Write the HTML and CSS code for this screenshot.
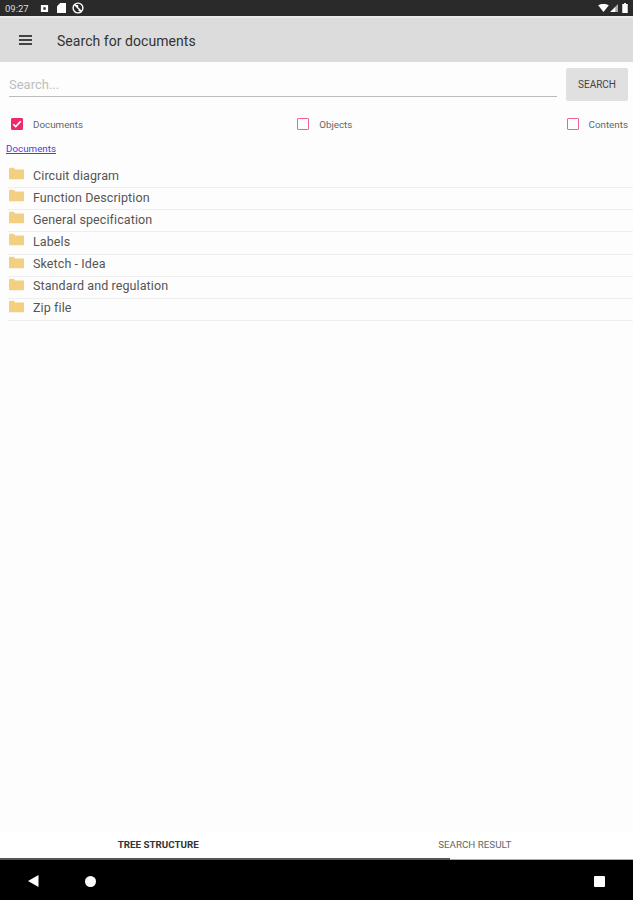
FILE: index.html
```html
<!DOCTYPE html>
<html>
<head>
<meta charset="UTF-8">
<title>Search for documents</title>
<link rel="stylesheet" href="styles.css">
</head>
<body>
<div class="status">
  <span class="time">09:27</span>
  <svg class="st-icon" viewBox="0 0 10 10"><path fill="#fff" fill-rule="evenodd" d="M1 1h8v8H1zM3.700 3.700v2.600h2.600V3.700z"/></svg>
  <svg class="st-icon st-file" viewBox="0 0 10 11"><path fill="#fff" d="M3.500 0H10v11H0V3.500z"/></svg>
  <svg class="st-icon st-wide" viewBox="0 0 12 12"><circle cx="6" cy="6" r="4.900" fill="none" stroke="#fff" stroke-width="1.400"/><path stroke="#fff" stroke-width="1.400" d="M2.600 2.600l6.800 6.800"/><circle cx="5" cy="4" r="1.300" fill="#fff"/><circle cx="7.500" cy="8.500" r="1" fill="#fff"/></svg>
  <span class="st-space"></span>
  <svg class="st-wifi" viewBox="0 0 12 9"><path fill="#fff" d="M0 1.500C3.500-.5 8.500-.5 12 1.500L6 9z"/></svg>
  <svg class="st-signal" viewBox="0 0 9 9"><path fill="#aaa" d="M9 0v9H0z"/><path fill="#fff" d="M6 3.500V9H.5z"/></svg>
  <svg class="st-batt" viewBox="0 0 6 11"><path fill="#fff" d="M2 0h2v1h2v10H0V1h2z"/></svg>
</div>
<div class="toolbar">
  <div class="burger"><i></i><i></i><i></i></div>
  <h1>Search for documents</h1>
</div>
<div class="search-row">
  <div class="search-input">Search...</div>
  <div class="search-btn">SEARCH</div>
</div>
<div class="checks">
  <label class="check">
    <span class="box on"><svg viewBox="0 0 12 12"><path fill="none" stroke="#fff" stroke-width="2" d="M1.500 6.300l3 2.900 6-6.500"/></svg></span>
    Documents
  </label>
  <label class="check"><span class="box"></span>Objects</label>
  <label class="check"><span class="box"></span>Contents</label>
</div>
<a class="crumb" href="#">Documents</a>
<ul class="tree">
  <li><svg class="folder" viewBox="0 0 15 12"><path d="M0 1.500C0 .7.600.2 1.300.2h3.400L6.200 2H15v9.800H0z"/></svg>Circuit diagram</li>
  <li><svg class="folder" viewBox="0 0 15 12"><path d="M0 1.500C0 .7.600.2 1.300.2h3.400L6.200 2H15v9.800H0z"/></svg>Function Description</li>
  <li><svg class="folder" viewBox="0 0 15 12"><path d="M0 1.500C0 .7.600.2 1.300.2h3.400L6.200 2H15v9.800H0z"/></svg>General specification</li>
  <li><svg class="folder" viewBox="0 0 15 12"><path d="M0 1.500C0 .7.600.2 1.300.2h3.400L6.200 2H15v9.800H0z"/></svg>Labels</li>
  <li><svg class="folder" viewBox="0 0 15 12"><path d="M0 1.500C0 .7.600.2 1.300.2h3.400L6.200 2H15v9.800H0z"/></svg>Sketch - Idea</li>
  <li><svg class="folder" viewBox="0 0 15 12"><path d="M0 1.500C0 .7.600.2 1.300.2h3.400L6.200 2H15v9.800H0z"/></svg>Standard and regulation</li>
  <li><svg class="folder" viewBox="0 0 15 12"><path d="M0 1.500C0 .7.600.2 1.300.2h3.400L6.200 2H15v9.800H0z"/></svg>Zip file</li>
</ul>
<div class="tabs">
  <div class="tab active">TREE STRUCTURE</div>
  <div class="tab">SEARCH RESULT</div>
  <div class="indicator"></div>
</div>
<div class="navbar">
  <svg class="nav-back" viewBox="0 0 11 12"><path fill="#fff" d="M0 6l10.500-6v12z"/></svg>
  <span class="nav-home"></span>
  <span class="nav-recent"></span>
</div>
</body>
</html>
```
FILE: styles.css
```css
html, body {
  margin: 0;
  height: 900px;
  overflow: hidden;
}
body {
  display: flex;
  flex-direction: column;
  background-color: #fdfdfd;
  font-family: Roboto, "Liberation Sans", sans-serif;
  color: #444;
}

/* status bar */
.status {
  height: 16px;
  background-color: #2a2a2a;
  border-bottom: 2px solid #e9e9e9;
  display: flex;
  align-items: center;
  padding: 0 5px 0 5px;
  color: #ddd;
  font-size: 9.500px;
  flex-shrink: 0;
}
.time { margin-right: 10px; width: 25px; }
.st-icon { width: 9px; height: 9px; margin-right: 7px; }
.st-file { height: 10px; margin-left: 1px; }
.st-wide { width: 12px; height: 12px; margin-left: -1px; }
.st-space { flex: 1; }
.st-wifi { width: 11px; height: 8px; }
.st-signal { width: 8px; height: 8px; margin-left: 1px; }
.st-batt { width: 6px; height: 10px; margin-left: 4px; }

/* toolbar */
.toolbar {
  height: 44px;
  background-color: #dcdcdc;
  display: flex;
  align-items: center;
  flex-shrink: 0;
}
.burger { width: 13px; margin-left: 19px; margin-right: 25px; }
.burger i {
  display: block;
  height: 1.500px;
  background-color: #444;
  margin: 2.500px 0;
}
.toolbar h1 {
  margin: 0;
  padding-top: 2px;
  font-size: 14px;
  font-weight: 400;
  color: #333;
  letter-spacing: 0.05px;
}

/* search */
.search-row {
  display: flex;
  gap: 9px;
  padding: 6px 5px 0 9px;
  flex-shrink: 0;
}
.search-input {
  flex: 1;
  height: 28px;
  line-height: 34px;
  border-bottom: 1px solid #bbb;
  color: #bdbdbd;
  font-size: 13px;
}
.search-btn {
  width: 62px;
  height: 33px;
  line-height: 34px;
  text-align: center;
  background-color: #e0e0e0;
  border-radius: 2px;
  font-size: 10px;
  color: #444;
}

/* checkboxes */
.checks {
  display: flex;
  justify-content: space-between;
  padding: 16px 5px 0 11px;
  flex-shrink: 0;
}
.check {
  display: flex;
  align-items: center;
  gap: 10px;
  font-size: 9.800px;
  color: #666;
  height: 14px;
}
.box {
  width: 10px;
  height: 10px;
  border: 1.500px solid #f06292;
  border-radius: 1px;
  display: block;
}
.box.on {
  background-color: #ee2a6c;
  border-color: #ee2a6c;
}
.box svg { display: block; width: 10px; height: 10px; }

.crumb {
  display: block;
  margin: 12px 0 0 6px;
  font-size: 9.800px;
  line-height: 11px;
  color: #4a3fe0;
  flex-shrink: 0;
}

/* tree */
.tree {
  list-style: none;
  margin: 12px 0 0;
  padding: 0 0 0 8px;
  flex: 1;
}
.tree li {
  display: flex;
  align-items: center;
  height: 18.150px;
  padding: 0 0 3px 1px;
  border-bottom: 1px solid #eee;
  font-size: 12.500px;
  letter-spacing: 0.1px;
  color: #555;
}
.folder {
  width: 15px;
  height: 13px;
  margin-right: 9px;
  margin-top: -3px;
  fill: #f3cf82;
}

/* tabs */
.tabs {
  height: 27px;
  display: flex;
  position: relative;
  background-color: #fff;
  border-bottom: 1px solid #aaa;
  flex-shrink: 0;
}
.tab {
  flex: 1;
  text-align: center;
  font-size: 9.800px;
  line-height: 26px;
  color: #666;
}
.tab.active { color: #333; font-weight: 700; }
.indicator {
  position: absolute;
  left: 0;
  bottom: -1px;
  width: 450px;
  height: 2px;
  background-color: #555;
}

/* android nav */
.navbar {
  height: 40px;
  background-color: #000;
  position: relative;
  flex-shrink: 0;
}
.nav-back { position: absolute; left: 28px; top: 15px; width: 11px; height: 12px; }
.nav-home {
  position: absolute;
  left: 85px;
  top: 16px;
  width: 11px;
  height: 11px;
  border-radius: 50%;
  background-color: #fff;
}
.nav-recent {
  position: absolute;
  left: 594px;
  top: 16px;
  width: 11px;
  height: 11px;
  border-radius: 1px;
  background-color: #fff;
}
```
